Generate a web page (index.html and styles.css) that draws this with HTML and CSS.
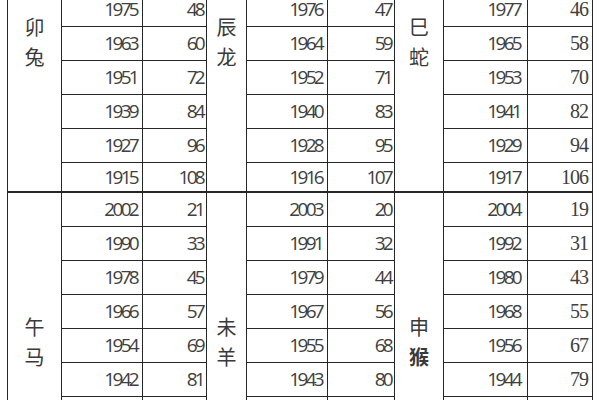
FILE: index.html
```html
<!DOCTYPE html>
<html lang="zh">
<head>
<meta charset="utf-8">
<title>生肖年份对照表</title>
<link rel="stylesheet" href="styles.css">
</head>
<body>
<div class="sheet">
<table class="zodiac">
<colgroup>
<col class="c-sign-a"><col class="c-year-a"><col class="c-age-a">
<col class="c-sign-b"><col class="c-year-b"><col class="c-age-b">
<col class="c-sign-c"><col class="c-year-c"><col class="c-age-c">
</colgroup>
<tbody class="grp grp-top">
<tr><td class="sign" rowspan="6">卯<br>兔</td><td class="yr">1975</td><td class="age">48</td><td class="sign" rowspan="6">辰<br>龙</td><td class="yr">1976</td><td class="age">47</td><td class="sign" rowspan="6">巳<br>蛇</td><td class="yr yr-c">1977</td><td class="age serif">46</td></tr>
<tr><td class="yr">1963</td><td class="age">60</td><td class="yr">1964</td><td class="age">59</td><td class="yr yr-c">1965</td><td class="age serif">58</td></tr>
<tr><td class="yr">1951</td><td class="age">72</td><td class="yr">1952</td><td class="age">71</td><td class="yr yr-c">1953</td><td class="age serif">70</td></tr>
<tr><td class="yr">1939</td><td class="age">84</td><td class="yr">1940</td><td class="age">83</td><td class="yr yr-c">1941</td><td class="age serif">82</td></tr>
<tr><td class="yr">1927</td><td class="age">96</td><td class="yr">1928</td><td class="age">95</td><td class="yr yr-c">1929</td><td class="age serif">94</td></tr>
<tr class="short"><td class="yr">1915</td><td class="age">108</td><td class="yr">1916</td><td class="age">107</td><td class="yr yr-c">1917</td><td class="age serif">106</td></tr>
</tbody>
<tbody class="grp grp-bottom">
<tr class="first"><td class="sign" rowspan="7">午<br>马</td><td class="yr">2002</td><td class="age">21</td><td class="sign" rowspan="7">未<br>羊</td><td class="yr">2003</td><td class="age">20</td><td class="sign" rowspan="7">申<br><span class="heavy">猴</span></td><td class="yr yr-c">2004</td><td class="age serif">19</td></tr>
<tr><td class="yr">1990</td><td class="age">33</td><td class="yr">1991</td><td class="age">32</td><td class="yr yr-c">1992</td><td class="age serif">31</td></tr>
<tr><td class="yr">1978</td><td class="age">45</td><td class="yr">1979</td><td class="age">44</td><td class="yr yr-c">1980</td><td class="age serif">43</td></tr>
<tr><td class="yr">1966</td><td class="age">57</td><td class="yr">1967</td><td class="age">56</td><td class="yr yr-c">1968</td><td class="age serif">55</td></tr>
<tr><td class="yr">1954</td><td class="age">69</td><td class="yr">1955</td><td class="age">68</td><td class="yr yr-c">1956</td><td class="age serif">67</td></tr>
<tr><td class="yr">1942</td><td class="age">81</td><td class="yr">1943</td><td class="age">80</td><td class="yr yr-c">1944</td><td class="age serif">79</td></tr>
<tr class="tail"><td></td><td></td><td></td><td></td><td></td><td></td></tr>
</tbody>
</table>
</div>
</body>
</html>
```
FILE: styles.css
```css
html, body {
  margin: 0;
  padding: 0;
  background: #ffffff;
}

body {
  width: 600px;
  height: 400px;
  overflow: hidden;
  font-family: "Open Sans", "Noto Sans CJK SC", sans-serif;
  color: #404040;
}

.sheet {
  padding-left: 7px;
}

.zodiac {
  margin-top: -8px;
  width: 585px;
  table-layout: fixed;
  border-collapse: collapse;
}

.c-sign-a { width: 54px; }
.c-year-a { width: 81px; }
.c-age-a  { width: 64px; }
.c-sign-b { width: 40px; }
.c-year-b { width: 81px; }
.c-age-b  { width: 67px; }
.c-sign-c { width: 49px; }
.c-year-c { width: 84px; }
.c-age-c  { width: 65px; }

.zodiac td {
  border: 1px solid #262626;
  padding: 0;
  height: 33px;
  font-size: 19px;
  line-height: 15px;
  text-align: right;
  vertical-align: middle;
  white-space: nowrap;
}

.zodiac tr.short td {
  height: 28px;
}

.zodiac tr.first td {
  border-top: 2px solid #262626;
}

.zodiac td.yr {
  padding-right: 5px;
  letter-spacing: -2.7px;
}

.zodiac td.yr-c {
  padding-right: 7px;
}

.zodiac td.age {
  padding-right: 3px;
  letter-spacing: -2.7px;
}

.zodiac td.serif {
  font-family: "Liberation Serif", serif;
  font-size: 20px;
  letter-spacing: -1px;
  padding-right: 4px;
}

.zodiac td.sign {
  text-align: center;
  vertical-align: top;
  font-family: "Noto Sans CJK SC", sans-serif;
  font-size: 20px;
  line-height: 30px;
  letter-spacing: 0;
  color: #3a3a3a;
}

.grp-top td.sign {
  padding-top: 19px;
}

.grp-bottom td.sign {
  padding-top: 119px;
}

.heavy {
  font-weight: 700;
}
```
